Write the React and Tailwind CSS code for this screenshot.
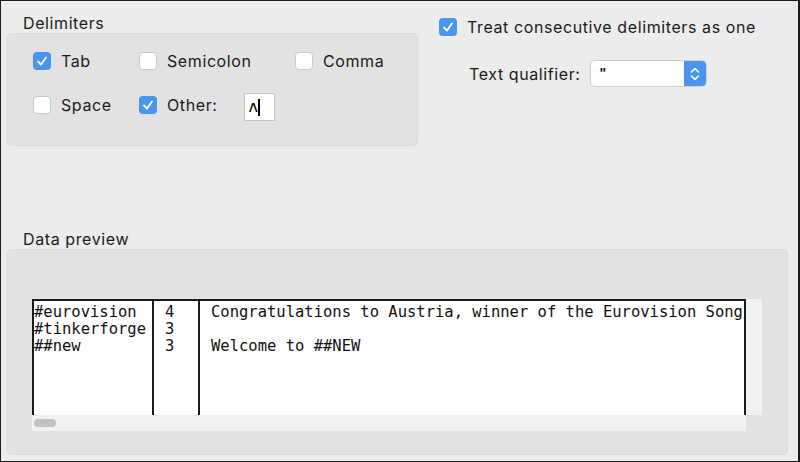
import React from "react";

function Check({ checked }) {
  if (checked) {
    return (
      <div className="w-[18px] h-[18px] rounded-[4px] bg-[#4a96ed] flex items-center justify-center shrink-0">
        <svg width="12" height="12" viewBox="0 0 12 12">
          <polyline points="2,6.5 5,9.5 10,2.5" fill="none" stroke="white" strokeWidth="1.8" strokeLinecap="round" strokeLinejoin="round" />
        </svg>
      </div>
    );
  }
  return <div className="w-[18px] h-[18px] rounded-[4px] bg-white border border-[#c8c8c8] shrink-0" />;
}

function Opt({ checked, label }) {
  return (
    <div className="flex items-center gap-[10px] h-[24px]">
      <Check checked={checked} />
      <span className="text-[16px] leading-[20px] tracking-[0.6px] text-[#1a1a1a]">{label}</span>
    </div>
  );
}

export default function App() {
  const mono = { fontFamily: '"DejaVu Sans Mono", monospace' };
  return (
    <div
      className="w-[800px] h-[462px] bg-[#ececec] border border-[#1c1c1c] border-r-2 box-border flex flex-col overflow-hidden"
      style={{ fontFamily: "Inter, 'Liberation Sans', sans-serif" }}
    >
      <div className="flex">
        <div className="ml-[6px] w-[411px] flex flex-col pt-[12px]">
          <div className="pl-[16px] text-[16px] leading-[20px] tracking-[0.6px] text-[#1a1a1a]">Delimiters</div>
          <div className="h-[113px] bg-[#e2e2e2] rounded-[5px] border border-[#dcdcdc] pl-[25px] pt-[15px]">
            <div className="grid grid-cols-[106px_156px_auto] gap-y-[20px]">
              <Opt checked label="Tab" />
              <Opt label="Semicolon" />
              <Opt label="Comma" />
              <Opt label="Space" />
              <div className="flex items-center gap-[10px] h-[24px]">
                <Check checked />
                <span className="text-[16px] leading-[20px] tracking-[0.6px] text-[#1a1a1a]">Other:</span>
                <div className="ml-[16px] mt-[4px] w-[31px] h-[28px] bg-white border border-[#c4c4c4] flex items-center pl-[4px]">
                  <span className="text-[16px] leading-[16px] text-black" style={{ fontFamily: "'DejaVu Sans', sans-serif" }}>ʌ</span>
                  <div className="w-[2px] h-[17px] bg-black" />
                </div>
              </div>
            </div>
          </div>
        </div>
        <div className="ml-[21px] flex flex-col pt-[14px]">
          <Opt checked label="Treat consecutive delimiters as one" />
          <div className="flex items-center mt-[21px] ml-[30px]">
            <span className="text-[16px] leading-[20px] tracking-[0.6px] text-[#1a1a1a]">Text qualifier:</span>
            <div className="ml-[9px] w-[117px] h-[27px] flex rounded-[5px] bg-white border border-[#cfcfcf] overflow-hidden">
              <div
                className="flex-1 pl-[9px] flex items-center text-[14px] font-bold text-[#111]"
                style={{ fontFamily: "'Liberation Sans', sans-serif" }}
              >
                "
              </div>
              <div className="w-[22px] bg-[#4a96ed] flex items-center justify-center">
                <svg width="12" height="18" viewBox="0 0 12 18">
                  <polyline points="2.5,7 6,3.5 9.5,7" fill="none" stroke="white" strokeWidth="1.6" strokeLinecap="round" strokeLinejoin="round" />
                  <polyline points="2.5,11 6,14.5 9.5,11" fill="none" stroke="white" strokeWidth="1.6" strokeLinecap="round" strokeLinejoin="round" />
                </svg>
              </div>
            </div>
          </div>
        </div>
      </div>

      <div className="mt-[83px] ml-[6px] flex flex-col">
        <div className="pl-[16px] text-[16px] leading-[20px] tracking-[0.6px] text-[#1a1a1a]">Data preview</div>
        <div className="w-[781px] h-[206px] bg-[#e2e2e2] rounded-[5px] border border-[#dcdcdc] pl-[24px] pt-[49px]">
          <div className="flex">
            <div className="w-[714px] h-[116px] bg-white border-t-2 border-l-2 border-r-2 border-[#1a1a1a] flex text-[15.5px] leading-[17px] text-[#111] pt-[3px]" style={mono}>
              <div className="w-[120px] border-r-2 border-[#1a1a1a] -mt-[3px] pt-[3px] whitespace-pre">
                <div>#eurovision</div>
                <div>#tinkerforge</div>
                <div>##new</div>
              </div>
              <div className="w-[46px] border-r-2 border-[#1a1a1a] -mt-[3px] pt-[3px] pl-[11px] whitespace-pre">
                <div>4</div>
                <div>3</div>
                <div>3</div>
              </div>
              <div className="flex-1 pl-[11px] whitespace-pre overflow-hidden">
                <div>Congratulations to Austria, winner of the Eurovision Song</div>
                <div>&nbsp;</div>
                <div>Welcome to ##NEW</div>
              </div>
            </div>
            <div className="w-[16px] h-[116px] bg-[#f1f1f1]" />
          </div>
          <div className="w-[714px] h-[16px] bg-[#f1f1f1] flex items-center pl-[2px]">
            <div className="w-[22px] h-[8px] rounded-full bg-[#c2c2c2]" />
          </div>
        </div>
      </div>
    </div>
  );
}
